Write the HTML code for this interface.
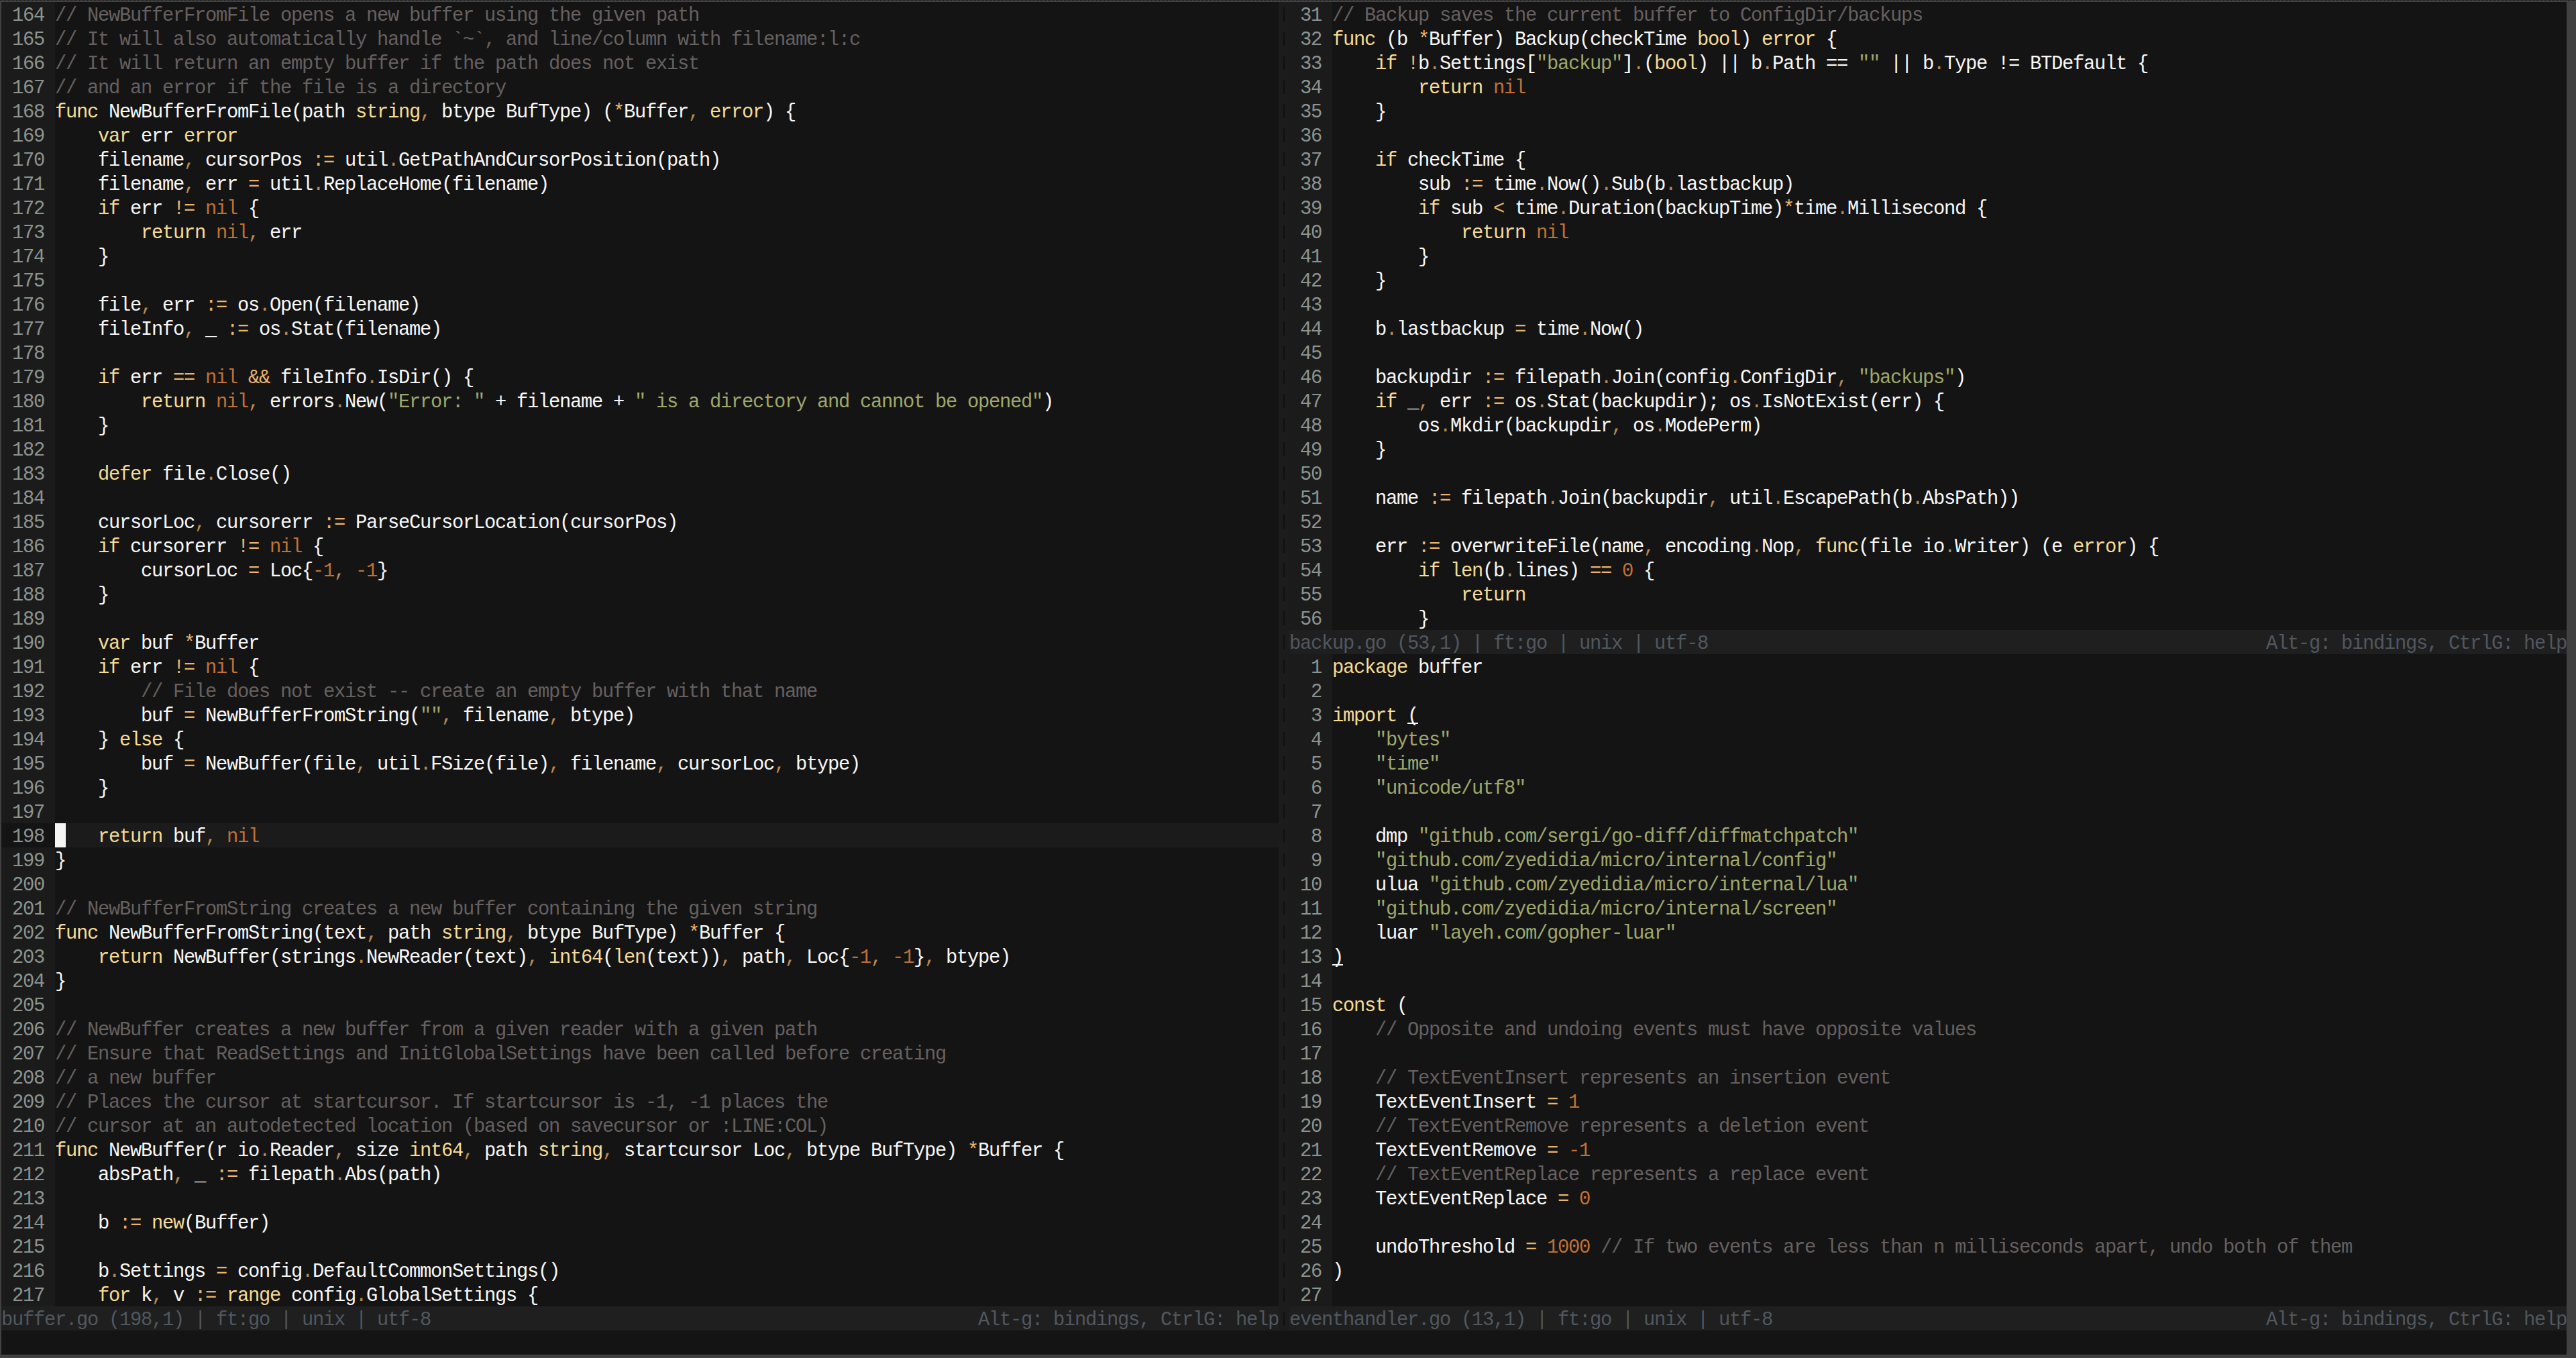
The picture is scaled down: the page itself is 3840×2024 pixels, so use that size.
<!DOCTYPE html>
<html><head><meta charset="utf-8"><style>
html,body{margin:0;padding:0;background:#414141;}
body{width:3840px;height:2024px;position:relative;overflow:hidden;font-family:"Liberation Mono",monospace;}
#top{position:absolute;left:0;top:0;width:3840px;height:1px;background:repeating-linear-gradient(90deg,#1c1c1c 0 1px,#3c3c3c 1px 2px);}
#scr{position:absolute;left:2px;top:3px;width:3824px;height:2016px;background:#141414;}
.gut,.cl,.cgut,.st,.div,.cur,.dbar,.ul{position:absolute;}
.gut{background:#1b1b1b;}
.cgut{background:#141414;}
.cl{background:#1b1b1b;}
.st{height:36px;background:#1f1f1f;}
.div{background:#1c1c1c;}
.dbar{width:2px;height:21px;background:#101010;}
.cur{width:16px;height:36px;background:#f5f6f3;}
.ul{width:16px;height:2px;background:#f8f8f8;}
.r{position:absolute;left:0;height:36px;width:3840px;}
.r span{position:absolute;top:3px;white-space:pre;font-size:28.8px;letter-spacing:-1.28px;line-height:36px;}
.d{color:#f8f8f8}
.c{color:#666060}
.k{color:#f6dc96}
.o{color:#ebb46c}
.y{color:#b88a55}
.n{color:#c07236}
.s{color:#9fa86c}
.ln{color:#8c9490}
.sl{color:#505860}
</style></head>
<body><div id="top"></div><div id="scr"></div>
<div class="gut" style="left:2px;top:3px;width:80px;height:1944px"></div>
<div class="cl" style="left:82px;top:1227px;width:1824px;height:36px"></div>
<div class="cgut" style="left:2px;top:1227px;width:80px;height:36px"></div>
<div class="r" style="top:3px"><span class="ln" style="left:18px">164</span></div>
<div class="r" style="top:3px"><span class="c" style="left:82px">// NewBufferFromFile opens a new buffer using the given path</span></div>
<div class="r" style="top:39px"><span class="ln" style="left:18px">165</span></div>
<div class="r" style="top:39px"><span class="c" style="left:82px">// It will also automatically handle `~`, and line/column with filename:l:c</span></div>
<div class="r" style="top:75px"><span class="ln" style="left:18px">166</span></div>
<div class="r" style="top:75px"><span class="c" style="left:82px">// It will return an empty buffer if the path does not exist</span></div>
<div class="r" style="top:111px"><span class="ln" style="left:18px">167</span></div>
<div class="r" style="top:111px"><span class="c" style="left:82px">// and an error if the file is a directory</span></div>
<div class="r" style="top:147px"><span class="ln" style="left:18px">168</span></div>
<div class="r" style="top:147px"><span class="k" style="left:82px">func</span><span class="d" style="left:162px">NewBufferFromFile(path</span><span class="k" style="left:530px">string</span><span class="y" style="left:626px">,</span><span class="d" style="left:658px">btype BufType) (</span><span class="o" style="left:914px">*</span><span class="d" style="left:930px">Buffer</span><span class="y" style="left:1026px">,</span><span class="k" style="left:1058px">error</span><span class="d" style="left:1138px">) {</span></div>
<div class="r" style="top:183px"><span class="ln" style="left:18px">169</span></div>
<div class="r" style="top:183px"><span class="k" style="left:146px">var</span><span class="d" style="left:210px">err</span><span class="k" style="left:274px">error</span></div>
<div class="r" style="top:219px"><span class="ln" style="left:18px">170</span></div>
<div class="r" style="top:219px"><span class="d" style="left:146px">filename</span><span class="y" style="left:274px">,</span><span class="d" style="left:306px">cursorPos</span><span class="o" style="left:466px">:=</span><span class="d" style="left:514px">util</span><span class="y" style="left:578px">.</span><span class="d" style="left:594px">GetPathAndCursorPosition(path)</span></div>
<div class="r" style="top:255px"><span class="ln" style="left:18px">171</span></div>
<div class="r" style="top:255px"><span class="d" style="left:146px">filename</span><span class="y" style="left:274px">,</span><span class="d" style="left:306px">err</span><span class="o" style="left:370px">=</span><span class="d" style="left:402px">util</span><span class="y" style="left:466px">.</span><span class="d" style="left:482px">ReplaceHome(filename)</span></div>
<div class="r" style="top:291px"><span class="ln" style="left:18px">172</span></div>
<div class="r" style="top:291px"><span class="k" style="left:146px">if</span><span class="d" style="left:194px">err</span><span class="o" style="left:258px">!=</span><span class="n" style="left:306px">nil</span><span class="d" style="left:370px">{</span></div>
<div class="r" style="top:327px"><span class="ln" style="left:18px">173</span></div>
<div class="r" style="top:327px"><span class="k" style="left:210px">return</span><span class="n" style="left:322px">nil</span><span class="y" style="left:370px">,</span><span class="d" style="left:402px">err</span></div>
<div class="r" style="top:363px"><span class="ln" style="left:18px">174</span></div>
<div class="r" style="top:363px"><span class="d" style="left:146px">}</span></div>
<div class="r" style="top:399px"><span class="ln" style="left:18px">175</span></div>
<div class="r" style="top:399px"></div>
<div class="r" style="top:435px"><span class="ln" style="left:18px">176</span></div>
<div class="r" style="top:435px"><span class="d" style="left:146px">file</span><span class="y" style="left:210px">,</span><span class="d" style="left:242px">err</span><span class="o" style="left:306px">:=</span><span class="d" style="left:354px">os</span><span class="y" style="left:386px">.</span><span class="d" style="left:402px">Open(filename)</span></div>
<div class="r" style="top:471px"><span class="ln" style="left:18px">177</span></div>
<div class="r" style="top:471px"><span class="d" style="left:146px">fileInfo</span><span class="y" style="left:274px">,</span><span class="d" style="left:306px">_</span><span class="o" style="left:338px">:=</span><span class="d" style="left:386px">os</span><span class="y" style="left:418px">.</span><span class="d" style="left:434px">Stat(filename)</span></div>
<div class="r" style="top:507px"><span class="ln" style="left:18px">178</span></div>
<div class="r" style="top:507px"></div>
<div class="r" style="top:543px"><span class="ln" style="left:18px">179</span></div>
<div class="r" style="top:543px"><span class="k" style="left:146px">if</span><span class="d" style="left:194px">err</span><span class="o" style="left:258px">==</span><span class="n" style="left:306px">nil</span><span class="o" style="left:370px">&amp;&amp;</span><span class="d" style="left:418px">fileInfo</span><span class="y" style="left:546px">.</span><span class="d" style="left:562px">IsDir() {</span></div>
<div class="r" style="top:579px"><span class="ln" style="left:18px">180</span></div>
<div class="r" style="top:579px"><span class="k" style="left:210px">return</span><span class="n" style="left:322px">nil</span><span class="y" style="left:370px">,</span><span class="d" style="left:402px">errors</span><span class="y" style="left:498px">.</span><span class="d" style="left:514px">New(</span><span class="s" style="left:578px">&quot;Error: &quot;</span><span class="d" style="left:738px">+ filename +</span><span class="s" style="left:946px">&quot; is a directory and cannot be opened&quot;</span><span class="d" style="left:1554px">)</span></div>
<div class="r" style="top:615px"><span class="ln" style="left:18px">181</span></div>
<div class="r" style="top:615px"><span class="d" style="left:146px">}</span></div>
<div class="r" style="top:651px"><span class="ln" style="left:18px">182</span></div>
<div class="r" style="top:651px"></div>
<div class="r" style="top:687px"><span class="ln" style="left:18px">183</span></div>
<div class="r" style="top:687px"><span class="k" style="left:146px">defer</span><span class="d" style="left:242px">file</span><span class="y" style="left:306px">.</span><span class="d" style="left:322px">Close()</span></div>
<div class="r" style="top:723px"><span class="ln" style="left:18px">184</span></div>
<div class="r" style="top:723px"></div>
<div class="r" style="top:759px"><span class="ln" style="left:18px">185</span></div>
<div class="r" style="top:759px"><span class="d" style="left:146px">cursorLoc</span><span class="y" style="left:290px">,</span><span class="d" style="left:322px">cursorerr</span><span class="o" style="left:482px">:=</span><span class="d" style="left:530px">ParseCursorLocation(cursorPos)</span></div>
<div class="r" style="top:795px"><span class="ln" style="left:18px">186</span></div>
<div class="r" style="top:795px"><span class="k" style="left:146px">if</span><span class="d" style="left:194px">cursorerr</span><span class="o" style="left:354px">!=</span><span class="n" style="left:402px">nil</span><span class="d" style="left:466px">{</span></div>
<div class="r" style="top:831px"><span class="ln" style="left:18px">187</span></div>
<div class="r" style="top:831px"><span class="d" style="left:210px">cursorLoc</span><span class="o" style="left:370px">=</span><span class="d" style="left:402px">Loc{</span><span class="n" style="left:466px">-1</span><span class="y" style="left:498px">,</span><span class="n" style="left:530px">-1</span><span class="d" style="left:562px">}</span></div>
<div class="r" style="top:867px"><span class="ln" style="left:18px">188</span></div>
<div class="r" style="top:867px"><span class="d" style="left:146px">}</span></div>
<div class="r" style="top:903px"><span class="ln" style="left:18px">189</span></div>
<div class="r" style="top:903px"></div>
<div class="r" style="top:939px"><span class="ln" style="left:18px">190</span></div>
<div class="r" style="top:939px"><span class="k" style="left:146px">var</span><span class="d" style="left:210px">buf</span><span class="o" style="left:274px">*</span><span class="d" style="left:290px">Buffer</span></div>
<div class="r" style="top:975px"><span class="ln" style="left:18px">191</span></div>
<div class="r" style="top:975px"><span class="k" style="left:146px">if</span><span class="d" style="left:194px">err</span><span class="o" style="left:258px">!=</span><span class="n" style="left:306px">nil</span><span class="d" style="left:370px">{</span></div>
<div class="r" style="top:1011px"><span class="ln" style="left:18px">192</span></div>
<div class="r" style="top:1011px"><span class="c" style="left:210px">// File does not exist -- create an empty buffer with that name</span></div>
<div class="r" style="top:1047px"><span class="ln" style="left:18px">193</span></div>
<div class="r" style="top:1047px"><span class="d" style="left:210px">buf</span><span class="o" style="left:274px">=</span><span class="d" style="left:306px">NewBufferFromString(</span><span class="s" style="left:626px">&quot;&quot;</span><span class="y" style="left:658px">,</span><span class="d" style="left:690px">filename</span><span class="y" style="left:818px">,</span><span class="d" style="left:850px">btype)</span></div>
<div class="r" style="top:1083px"><span class="ln" style="left:18px">194</span></div>
<div class="r" style="top:1083px"><span class="d" style="left:146px">}</span><span class="k" style="left:178px">else</span><span class="d" style="left:258px">{</span></div>
<div class="r" style="top:1119px"><span class="ln" style="left:18px">195</span></div>
<div class="r" style="top:1119px"><span class="d" style="left:210px">buf</span><span class="o" style="left:274px">=</span><span class="d" style="left:306px">NewBuffer(file</span><span class="y" style="left:530px">,</span><span class="d" style="left:562px">util</span><span class="y" style="left:626px">.</span><span class="d" style="left:642px">FSize(file)</span><span class="y" style="left:818px">,</span><span class="d" style="left:850px">filename</span><span class="y" style="left:978px">,</span><span class="d" style="left:1010px">cursorLoc</span><span class="y" style="left:1154px">,</span><span class="d" style="left:1186px">btype)</span></div>
<div class="r" style="top:1155px"><span class="ln" style="left:18px">196</span></div>
<div class="r" style="top:1155px"><span class="d" style="left:146px">}</span></div>
<div class="r" style="top:1191px"><span class="ln" style="left:18px">197</span></div>
<div class="r" style="top:1191px"></div>
<div class="r" style="top:1227px"><span class="ln" style="left:18px">198</span></div>
<div class="r" style="top:1227px"><span class="k" style="left:146px">return</span><span class="d" style="left:258px">buf</span><span class="y" style="left:306px">,</span><span class="n" style="left:338px">nil</span></div>
<div class="r" style="top:1263px"><span class="ln" style="left:18px">199</span></div>
<div class="r" style="top:1263px"><span class="d" style="left:82px">}</span></div>
<div class="r" style="top:1299px"><span class="ln" style="left:18px">200</span></div>
<div class="r" style="top:1299px"></div>
<div class="r" style="top:1335px"><span class="ln" style="left:18px">201</span></div>
<div class="r" style="top:1335px"><span class="c" style="left:82px">// NewBufferFromString creates a new buffer containing the given string</span></div>
<div class="r" style="top:1371px"><span class="ln" style="left:18px">202</span></div>
<div class="r" style="top:1371px"><span class="k" style="left:82px">func</span><span class="d" style="left:162px">NewBufferFromString(text</span><span class="y" style="left:546px">,</span><span class="d" style="left:578px">path</span><span class="k" style="left:658px">string</span><span class="y" style="left:754px">,</span><span class="d" style="left:786px">btype BufType)</span><span class="o" style="left:1026px">*</span><span class="d" style="left:1042px">Buffer {</span></div>
<div class="r" style="top:1407px"><span class="ln" style="left:18px">203</span></div>
<div class="r" style="top:1407px"><span class="k" style="left:146px">return</span><span class="d" style="left:258px">NewBuffer(strings</span><span class="y" style="left:530px">.</span><span class="d" style="left:546px">NewReader(text)</span><span class="y" style="left:786px">,</span><span class="k" style="left:818px">int64</span><span class="d" style="left:898px">(</span><span class="k" style="left:914px">len</span><span class="d" style="left:962px">(text))</span><span class="y" style="left:1074px">,</span><span class="d" style="left:1106px">path</span><span class="y" style="left:1170px">,</span><span class="d" style="left:1202px">Loc{</span><span class="n" style="left:1266px">-1</span><span class="y" style="left:1298px">,</span><span class="n" style="left:1330px">-1</span><span class="d" style="left:1362px">}</span><span class="y" style="left:1378px">,</span><span class="d" style="left:1410px">btype)</span></div>
<div class="r" style="top:1443px"><span class="ln" style="left:18px">204</span></div>
<div class="r" style="top:1443px"><span class="d" style="left:82px">}</span></div>
<div class="r" style="top:1479px"><span class="ln" style="left:18px">205</span></div>
<div class="r" style="top:1479px"></div>
<div class="r" style="top:1515px"><span class="ln" style="left:18px">206</span></div>
<div class="r" style="top:1515px"><span class="c" style="left:82px">// NewBuffer creates a new buffer from a given reader with a given path</span></div>
<div class="r" style="top:1551px"><span class="ln" style="left:18px">207</span></div>
<div class="r" style="top:1551px"><span class="c" style="left:82px">// Ensure that ReadSettings and InitGlobalSettings have been called before creating</span></div>
<div class="r" style="top:1587px"><span class="ln" style="left:18px">208</span></div>
<div class="r" style="top:1587px"><span class="c" style="left:82px">// a new buffer</span></div>
<div class="r" style="top:1623px"><span class="ln" style="left:18px">209</span></div>
<div class="r" style="top:1623px"><span class="c" style="left:82px">// Places the cursor at startcursor. If startcursor is -1, -1 places the</span></div>
<div class="r" style="top:1659px"><span class="ln" style="left:18px">210</span></div>
<div class="r" style="top:1659px"><span class="c" style="left:82px">// cursor at an autodetected location (based on savecursor or :LINE:COL)</span></div>
<div class="r" style="top:1695px"><span class="ln" style="left:18px">211</span></div>
<div class="r" style="top:1695px"><span class="k" style="left:82px">func</span><span class="d" style="left:162px">NewBuffer(r io</span><span class="y" style="left:386px">.</span><span class="d" style="left:402px">Reader</span><span class="y" style="left:498px">,</span><span class="d" style="left:530px">size</span><span class="k" style="left:610px">int64</span><span class="y" style="left:690px">,</span><span class="d" style="left:722px">path</span><span class="k" style="left:802px">string</span><span class="y" style="left:898px">,</span><span class="d" style="left:930px">startcursor Loc</span><span class="y" style="left:1170px">,</span><span class="d" style="left:1202px">btype BufType)</span><span class="o" style="left:1442px">*</span><span class="d" style="left:1458px">Buffer {</span></div>
<div class="r" style="top:1731px"><span class="ln" style="left:18px">212</span></div>
<div class="r" style="top:1731px"><span class="d" style="left:146px">absPath</span><span class="y" style="left:258px">,</span><span class="d" style="left:290px">_</span><span class="o" style="left:322px">:=</span><span class="d" style="left:370px">filepath</span><span class="y" style="left:498px">.</span><span class="d" style="left:514px">Abs(path)</span></div>
<div class="r" style="top:1767px"><span class="ln" style="left:18px">213</span></div>
<div class="r" style="top:1767px"></div>
<div class="r" style="top:1803px"><span class="ln" style="left:18px">214</span></div>
<div class="r" style="top:1803px"><span class="d" style="left:146px">b</span><span class="o" style="left:178px">:=</span><span class="k" style="left:226px">new</span><span class="d" style="left:274px">(Buffer)</span></div>
<div class="r" style="top:1839px"><span class="ln" style="left:18px">215</span></div>
<div class="r" style="top:1839px"></div>
<div class="r" style="top:1875px"><span class="ln" style="left:18px">216</span></div>
<div class="r" style="top:1875px"><span class="d" style="left:146px">b</span><span class="y" style="left:162px">.</span><span class="d" style="left:178px">Settings</span><span class="o" style="left:322px">=</span><span class="d" style="left:354px">config</span><span class="y" style="left:450px">.</span><span class="d" style="left:466px">DefaultCommonSettings()</span></div>
<div class="r" style="top:1911px"><span class="ln" style="left:18px">217</span></div>
<div class="r" style="top:1911px"><span class="k" style="left:146px">for</span><span class="d" style="left:210px">k</span><span class="y" style="left:226px">,</span><span class="d" style="left:258px">v</span><span class="o" style="left:290px">:=</span><span class="k" style="left:338px">range</span><span class="d" style="left:434px">config</span><span class="y" style="left:530px">.</span><span class="d" style="left:546px">GlobalSettings {</span></div>
<div class="cur" style="left:82px;top:1227px"></div>
<div class="st" style="left:2px;top:1947px;width:1904px"></div><div class="r" style="top:1947px"><span class="sl" style="left:2px">buffer.go (198,1) | ft:go | unix | utf-8</span><span class="sl" style="left:1458px">Alt-g: bindings, CtrlG: help</span></div>
<div class="gut" style="left:1922px;top:3px;width:64px;height:936px"></div>
<div class="r" style="top:3px"><span class="ln" style="left:1938px">31</span></div>
<div class="r" style="top:3px"><span class="c" style="left:1986px">// Backup saves the current buffer to ConfigDir/backups</span></div>
<div class="r" style="top:39px"><span class="ln" style="left:1938px">32</span></div>
<div class="r" style="top:39px"><span class="k" style="left:1986px">func</span><span class="d" style="left:2066px">(b</span><span class="o" style="left:2114px">*</span><span class="d" style="left:2130px">Buffer) Backup(checkTime</span><span class="k" style="left:2530px">bool</span><span class="d" style="left:2594px">)</span><span class="k" style="left:2626px">error</span><span class="d" style="left:2722px">{</span></div>
<div class="r" style="top:75px"><span class="ln" style="left:1938px">33</span></div>
<div class="r" style="top:75px"><span class="k" style="left:2050px">if</span><span class="o" style="left:2098px">!</span><span class="d" style="left:2114px">b</span><span class="y" style="left:2130px">.</span><span class="d" style="left:2146px">Settings[</span><span class="s" style="left:2290px">&quot;backup&quot;</span><span class="d" style="left:2418px">]</span><span class="y" style="left:2434px">.</span><span class="d" style="left:2450px">(</span><span class="k" style="left:2466px">bool</span><span class="d" style="left:2530px">) || b</span><span class="y" style="left:2626px">.</span><span class="d" style="left:2642px">Path ==</span><span class="s" style="left:2770px">&quot;&quot;</span><span class="d" style="left:2818px">|| b</span><span class="y" style="left:2882px">.</span><span class="d" style="left:2898px">Type != BTDefault {</span></div>
<div class="r" style="top:111px"><span class="ln" style="left:1938px">34</span></div>
<div class="r" style="top:111px"><span class="k" style="left:2114px">return</span><span class="n" style="left:2226px">nil</span></div>
<div class="r" style="top:147px"><span class="ln" style="left:1938px">35</span></div>
<div class="r" style="top:147px"><span class="d" style="left:2050px">}</span></div>
<div class="r" style="top:183px"><span class="ln" style="left:1938px">36</span></div>
<div class="r" style="top:183px"></div>
<div class="r" style="top:219px"><span class="ln" style="left:1938px">37</span></div>
<div class="r" style="top:219px"><span class="k" style="left:2050px">if</span><span class="d" style="left:2098px">checkTime {</span></div>
<div class="r" style="top:255px"><span class="ln" style="left:1938px">38</span></div>
<div class="r" style="top:255px"><span class="d" style="left:2114px">sub</span><span class="o" style="left:2178px">:=</span><span class="d" style="left:2226px">time</span><span class="y" style="left:2290px">.</span><span class="d" style="left:2306px">Now()</span><span class="y" style="left:2386px">.</span><span class="d" style="left:2402px">Sub(b</span><span class="y" style="left:2482px">.</span><span class="d" style="left:2498px">lastbackup)</span></div>
<div class="r" style="top:291px"><span class="ln" style="left:1938px">39</span></div>
<div class="r" style="top:291px"><span class="k" style="left:2114px">if</span><span class="d" style="left:2162px">sub</span><span class="o" style="left:2226px">&lt;</span><span class="d" style="left:2258px">time</span><span class="y" style="left:2322px">.</span><span class="d" style="left:2338px">Duration(backupTime)</span><span class="o" style="left:2658px">*</span><span class="d" style="left:2674px">time</span><span class="y" style="left:2738px">.</span><span class="d" style="left:2754px">Millisecond {</span></div>
<div class="r" style="top:327px"><span class="ln" style="left:1938px">40</span></div>
<div class="r" style="top:327px"><span class="k" style="left:2178px">return</span><span class="n" style="left:2290px">nil</span></div>
<div class="r" style="top:363px"><span class="ln" style="left:1938px">41</span></div>
<div class="r" style="top:363px"><span class="d" style="left:2114px">}</span></div>
<div class="r" style="top:399px"><span class="ln" style="left:1938px">42</span></div>
<div class="r" style="top:399px"><span class="d" style="left:2050px">}</span></div>
<div class="r" style="top:435px"><span class="ln" style="left:1938px">43</span></div>
<div class="r" style="top:435px"></div>
<div class="r" style="top:471px"><span class="ln" style="left:1938px">44</span></div>
<div class="r" style="top:471px"><span class="d" style="left:2050px">b</span><span class="y" style="left:2066px">.</span><span class="d" style="left:2082px">lastbackup</span><span class="o" style="left:2258px">=</span><span class="d" style="left:2290px">time</span><span class="y" style="left:2354px">.</span><span class="d" style="left:2370px">Now()</span></div>
<div class="r" style="top:507px"><span class="ln" style="left:1938px">45</span></div>
<div class="r" style="top:507px"></div>
<div class="r" style="top:543px"><span class="ln" style="left:1938px">46</span></div>
<div class="r" style="top:543px"><span class="d" style="left:2050px">backupdir</span><span class="o" style="left:2210px">:=</span><span class="d" style="left:2258px">filepath</span><span class="y" style="left:2386px">.</span><span class="d" style="left:2402px">Join(config</span><span class="y" style="left:2578px">.</span><span class="d" style="left:2594px">ConfigDir</span><span class="y" style="left:2738px">,</span><span class="s" style="left:2770px">&quot;backups&quot;</span><span class="d" style="left:2914px">)</span></div>
<div class="r" style="top:579px"><span class="ln" style="left:1938px">47</span></div>
<div class="r" style="top:579px"><span class="k" style="left:2050px">if</span><span class="d" style="left:2098px">_</span><span class="y" style="left:2114px">,</span><span class="d" style="left:2146px">err</span><span class="o" style="left:2210px">:=</span><span class="d" style="left:2258px">os</span><span class="y" style="left:2290px">.</span><span class="d" style="left:2306px">Stat(backupdir); os</span><span class="y" style="left:2610px">.</span><span class="d" style="left:2626px">IsNotExist(err) {</span></div>
<div class="r" style="top:615px"><span class="ln" style="left:1938px">48</span></div>
<div class="r" style="top:615px"><span class="d" style="left:2114px">os</span><span class="y" style="left:2146px">.</span><span class="d" style="left:2162px">Mkdir(backupdir</span><span class="y" style="left:2402px">,</span><span class="d" style="left:2434px">os</span><span class="y" style="left:2466px">.</span><span class="d" style="left:2482px">ModePerm)</span></div>
<div class="r" style="top:651px"><span class="ln" style="left:1938px">49</span></div>
<div class="r" style="top:651px"><span class="d" style="left:2050px">}</span></div>
<div class="r" style="top:687px"><span class="ln" style="left:1938px">50</span></div>
<div class="r" style="top:687px"></div>
<div class="r" style="top:723px"><span class="ln" style="left:1938px">51</span></div>
<div class="r" style="top:723px"><span class="d" style="left:2050px">name</span><span class="o" style="left:2130px">:=</span><span class="d" style="left:2178px">filepath</span><span class="y" style="left:2306px">.</span><span class="d" style="left:2322px">Join(backupdir</span><span class="y" style="left:2546px">,</span><span class="d" style="left:2578px">util</span><span class="y" style="left:2642px">.</span><span class="d" style="left:2658px">EscapePath(b</span><span class="y" style="left:2850px">.</span><span class="d" style="left:2866px">AbsPath))</span></div>
<div class="r" style="top:759px"><span class="ln" style="left:1938px">52</span></div>
<div class="r" style="top:759px"></div>
<div class="r" style="top:795px"><span class="ln" style="left:1938px">53</span></div>
<div class="r" style="top:795px"><span class="d" style="left:2050px">err</span><span class="o" style="left:2114px">:=</span><span class="d" style="left:2162px">overwriteFile(name</span><span class="y" style="left:2450px">,</span><span class="d" style="left:2482px">encoding</span><span class="y" style="left:2610px">.</span><span class="d" style="left:2626px">Nop</span><span class="y" style="left:2674px">,</span><span class="k" style="left:2706px">func</span><span class="d" style="left:2770px">(file io</span><span class="y" style="left:2898px">.</span><span class="d" style="left:2914px">Writer) (e</span><span class="k" style="left:3090px">error</span><span class="d" style="left:3170px">) {</span></div>
<div class="r" style="top:831px"><span class="ln" style="left:1938px">54</span></div>
<div class="r" style="top:831px"><span class="k" style="left:2114px">if len</span><span class="d" style="left:2210px">(b</span><span class="y" style="left:2242px">.</span><span class="d" style="left:2258px">lines)</span><span class="o" style="left:2370px">==</span><span class="n" style="left:2418px">0</span><span class="d" style="left:2450px">{</span></div>
<div class="r" style="top:867px"><span class="ln" style="left:1938px">55</span></div>
<div class="r" style="top:867px"><span class="k" style="left:2178px">return</span></div>
<div class="r" style="top:903px"><span class="ln" style="left:1938px">56</span></div>
<div class="r" style="top:903px"><span class="d" style="left:2114px">}</span></div>
<div class="st" style="left:1922px;top:939px;width:1904px"></div><div class="r" style="top:939px"><span class="sl" style="left:1922px">backup.go (53,1) | ft:go | unix | utf-8</span><span class="sl" style="left:3378px">Alt-g: bindings, CtrlG: help</span></div>
<div class="gut" style="left:1922px;top:975px;width:64px;height:972px"></div>
<div class="r" style="top:975px"><span class="ln" style="left:1938px"> 1</span></div>
<div class="r" style="top:975px"><span class="k" style="left:1986px">package</span><span class="d" style="left:2114px">buffer</span></div>
<div class="r" style="top:1011px"><span class="ln" style="left:1938px"> 2</span></div>
<div class="r" style="top:1011px"></div>
<div class="r" style="top:1047px"><span class="ln" style="left:1938px"> 3</span></div>
<div class="r" style="top:1047px"><span class="k" style="left:1986px">import</span><span class="d" style="left:2098px">(</span></div>
<div class="r" style="top:1083px"><span class="ln" style="left:1938px"> 4</span></div>
<div class="r" style="top:1083px"><span class="s" style="left:2050px">&quot;bytes&quot;</span></div>
<div class="r" style="top:1119px"><span class="ln" style="left:1938px"> 5</span></div>
<div class="r" style="top:1119px"><span class="s" style="left:2050px">&quot;time&quot;</span></div>
<div class="r" style="top:1155px"><span class="ln" style="left:1938px"> 6</span></div>
<div class="r" style="top:1155px"><span class="s" style="left:2050px">&quot;unicode/utf8&quot;</span></div>
<div class="r" style="top:1191px"><span class="ln" style="left:1938px"> 7</span></div>
<div class="r" style="top:1191px"></div>
<div class="r" style="top:1227px"><span class="ln" style="left:1938px"> 8</span></div>
<div class="r" style="top:1227px"><span class="d" style="left:2050px">dmp</span><span class="s" style="left:2114px">&quot;github.com/sergi/go-diff/diffmatchpatch&quot;</span></div>
<div class="r" style="top:1263px"><span class="ln" style="left:1938px"> 9</span></div>
<div class="r" style="top:1263px"><span class="s" style="left:2050px">&quot;github.com/zyedidia/micro/internal/config&quot;</span></div>
<div class="r" style="top:1299px"><span class="ln" style="left:1938px">10</span></div>
<div class="r" style="top:1299px"><span class="d" style="left:2050px">ulua</span><span class="s" style="left:2130px">&quot;github.com/zyedidia/micro/internal/lua&quot;</span></div>
<div class="r" style="top:1335px"><span class="ln" style="left:1938px">11</span></div>
<div class="r" style="top:1335px"><span class="s" style="left:2050px">&quot;github.com/zyedidia/micro/internal/screen&quot;</span></div>
<div class="r" style="top:1371px"><span class="ln" style="left:1938px">12</span></div>
<div class="r" style="top:1371px"><span class="d" style="left:2050px">luar</span><span class="s" style="left:2130px">&quot;layeh.com/gopher-luar&quot;</span></div>
<div class="r" style="top:1407px"><span class="ln" style="left:1938px">13</span></div>
<div class="r" style="top:1407px"><span class="d" style="left:1986px">)</span></div>
<div class="r" style="top:1443px"><span class="ln" style="left:1938px">14</span></div>
<div class="r" style="top:1443px"></div>
<div class="r" style="top:1479px"><span class="ln" style="left:1938px">15</span></div>
<div class="r" style="top:1479px"><span class="k" style="left:1986px">const</span><span class="d" style="left:2082px">(</span></div>
<div class="r" style="top:1515px"><span class="ln" style="left:1938px">16</span></div>
<div class="r" style="top:1515px"><span class="c" style="left:2050px">// Opposite and undoing events must have opposite values</span></div>
<div class="r" style="top:1551px"><span class="ln" style="left:1938px">17</span></div>
<div class="r" style="top:1551px"></div>
<div class="r" style="top:1587px"><span class="ln" style="left:1938px">18</span></div>
<div class="r" style="top:1587px"><span class="c" style="left:2050px">// TextEventInsert represents an insertion event</span></div>
<div class="r" style="top:1623px"><span class="ln" style="left:1938px">19</span></div>
<div class="r" style="top:1623px"><span class="d" style="left:2050px">TextEventInsert</span><span class="o" style="left:2306px">=</span><span class="n" style="left:2338px">1</span></div>
<div class="r" style="top:1659px"><span class="ln" style="left:1938px">20</span></div>
<div class="r" style="top:1659px"><span class="c" style="left:2050px">// TextEventRemove represents a deletion event</span></div>
<div class="r" style="top:1695px"><span class="ln" style="left:1938px">21</span></div>
<div class="r" style="top:1695px"><span class="d" style="left:2050px">TextEventRemove</span><span class="o" style="left:2306px">=</span><span class="n" style="left:2338px">-1</span></div>
<div class="r" style="top:1731px"><span class="ln" style="left:1938px">22</span></div>
<div class="r" style="top:1731px"><span class="c" style="left:2050px">// TextEventReplace represents a replace event</span></div>
<div class="r" style="top:1767px"><span class="ln" style="left:1938px">23</span></div>
<div class="r" style="top:1767px"><span class="d" style="left:2050px">TextEventReplace</span><span class="o" style="left:2322px">=</span><span class="n" style="left:2354px">0</span></div>
<div class="r" style="top:1803px"><span class="ln" style="left:1938px">24</span></div>
<div class="r" style="top:1803px"></div>
<div class="r" style="top:1839px"><span class="ln" style="left:1938px">25</span></div>
<div class="r" style="top:1839px"><span class="d" style="left:2050px">undoThreshold</span><span class="o" style="left:2274px">=</span><span class="n" style="left:2306px">1000</span><span class="c" style="left:2386px">// If two events are less than n milliseconds apart, undo both of them</span></div>
<div class="r" style="top:1875px"><span class="ln" style="left:1938px">26</span></div>
<div class="r" style="top:1875px"><span class="d" style="left:1986px">)</span></div>
<div class="r" style="top:1911px"><span class="ln" style="left:1938px">27</span></div>
<div class="r" style="top:1911px"></div>
<div class="st" style="left:1922px;top:1947px;width:1904px"></div><div class="r" style="top:1947px"><span class="sl" style="left:1922px">eventhandler.go (13,1) | ft:go | unix | utf-8</span><span class="sl" style="left:3378px">Alt-g: bindings, CtrlG: help</span></div>
<div class="div" style="left:1906px;top:3px;width:16px;height:1980px"></div>
<div class="dbar" style="left:1913px;top:11px"></div>
<div class="dbar" style="left:1913px;top:47px"></div>
<div class="dbar" style="left:1913px;top:83px"></div>
<div class="dbar" style="left:1913px;top:119px"></div>
<div class="dbar" style="left:1913px;top:155px"></div>
<div class="dbar" style="left:1913px;top:191px"></div>
<div class="dbar" style="left:1913px;top:227px"></div>
<div class="dbar" style="left:1913px;top:263px"></div>
<div class="dbar" style="left:1913px;top:299px"></div>
<div class="dbar" style="left:1913px;top:335px"></div>
<div class="dbar" style="left:1913px;top:371px"></div>
<div class="dbar" style="left:1913px;top:407px"></div>
<div class="dbar" style="left:1913px;top:443px"></div>
<div class="dbar" style="left:1913px;top:479px"></div>
<div class="dbar" style="left:1913px;top:515px"></div>
<div class="dbar" style="left:1913px;top:551px"></div>
<div class="dbar" style="left:1913px;top:587px"></div>
<div class="dbar" style="left:1913px;top:623px"></div>
<div class="dbar" style="left:1913px;top:659px"></div>
<div class="dbar" style="left:1913px;top:695px"></div>
<div class="dbar" style="left:1913px;top:731px"></div>
<div class="dbar" style="left:1913px;top:767px"></div>
<div class="dbar" style="left:1913px;top:803px"></div>
<div class="dbar" style="left:1913px;top:839px"></div>
<div class="dbar" style="left:1913px;top:875px"></div>
<div class="dbar" style="left:1913px;top:911px"></div>
<div class="dbar" style="left:1913px;top:947px"></div>
<div class="dbar" style="left:1913px;top:983px"></div>
<div class="dbar" style="left:1913px;top:1019px"></div>
<div class="dbar" style="left:1913px;top:1055px"></div>
<div class="dbar" style="left:1913px;top:1091px"></div>
<div class="dbar" style="left:1913px;top:1127px"></div>
<div class="dbar" style="left:1913px;top:1163px"></div>
<div class="dbar" style="left:1913px;top:1199px"></div>
<div class="dbar" style="left:1913px;top:1235px"></div>
<div class="dbar" style="left:1913px;top:1271px"></div>
<div class="dbar" style="left:1913px;top:1307px"></div>
<div class="dbar" style="left:1913px;top:1343px"></div>
<div class="dbar" style="left:1913px;top:1379px"></div>
<div class="dbar" style="left:1913px;top:1415px"></div>
<div class="dbar" style="left:1913px;top:1451px"></div>
<div class="dbar" style="left:1913px;top:1487px"></div>
<div class="dbar" style="left:1913px;top:1523px"></div>
<div class="dbar" style="left:1913px;top:1559px"></div>
<div class="dbar" style="left:1913px;top:1595px"></div>
<div class="dbar" style="left:1913px;top:1631px"></div>
<div class="dbar" style="left:1913px;top:1667px"></div>
<div class="dbar" style="left:1913px;top:1703px"></div>
<div class="dbar" style="left:1913px;top:1739px"></div>
<div class="dbar" style="left:1913px;top:1775px"></div>
<div class="dbar" style="left:1913px;top:1811px"></div>
<div class="dbar" style="left:1913px;top:1847px"></div>
<div class="dbar" style="left:1913px;top:1883px"></div>
<div class="dbar" style="left:1913px;top:1919px"></div>
<div class="dbar" style="left:1913px;top:1955px"></div>
<div class="ul" style="left:2098px;top:1077px"></div>
<div class="ul" style="left:1986px;top:1437px"></div>
</body></html>
